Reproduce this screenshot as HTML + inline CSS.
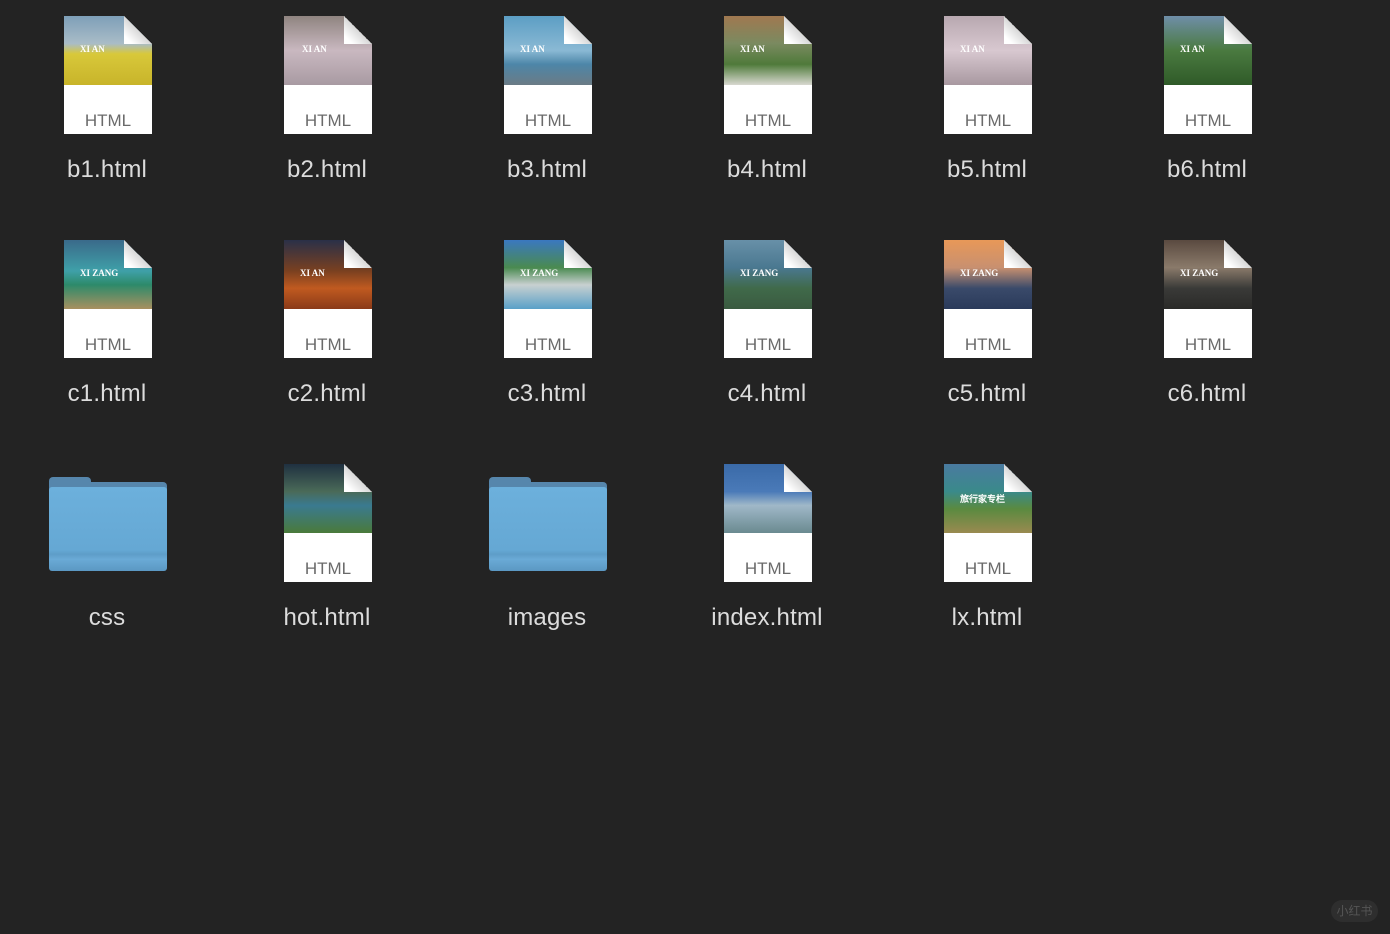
<!DOCTYPE html>
<html><head><meta charset="utf-8"><style>
body{margin:0;width:1390px;height:934px;background:#232323;font-family:"Liberation Sans",sans-serif;position:relative;overflow:hidden}
.f{position:absolute;width:88px;height:118px;background:#fff;clip-path:polygon(0 0,60px 0,88px 28px,88px 118px,0 118px)}
.f .img{position:absolute;left:0;top:0;width:88px;height:69px}
.f .fold{position:absolute;right:0;top:0;width:28px;height:28px;background:linear-gradient(225deg,#232323 50%,#d8d8d8 50%,#fff 85%)}
.f .t{position:absolute;left:0;right:0;top:95px;text-align:center;font-size:17px;color:#6a6a6a}
.f .x{position:absolute;left:16px;top:28px;font:bold 9px "Liberation Serif",serif;color:#fff}
.l{position:absolute;width:200px;text-align:center;font-size:24px;color:#dcdcdc;letter-spacing:0.2px}
.d{position:absolute;width:118px;height:95px}
.d .tab{position:absolute;left:0;top:0;width:42px;height:14px;background:#5686ac;border-radius:4px 4px 0 0}
.d .tab2{position:absolute;left:0;top:5px;width:118px;height:10px;background:#5686ac;border-radius:4px 4px 0 0}
.d .b{position:absolute;left:0;top:10px;width:118px;height:84px;border-radius:3px;background:linear-gradient(#6cb0dc,#65a8d4 75%,#5e9dc8 80%,#6aaad6 86%,#5b98c3)}
.wm{position:absolute;left:1331px;top:900px;width:47px;height:22px;border-radius:11px;background:#2e2e2e;color:#555;font:12px "Noto Sans CJK SC",sans-serif;text-align:center;line-height:22px}
</style></head><body>
<div class="f" style="left:64px;top:16px"><div class="img" style="background:linear-gradient(#7e9fb8 0,#a9bcc7 40%,#d8c83a 55%,#c8b42a)"></div><div class="x">XI AN</div><div class="fold"></div><div class="t">HTML</div></div>
<div class="f" style="left:284px;top:16px"><div class="img" style="background:linear-gradient(#8f8480,#c9b8c0 50%,#a89aa2)"></div><div class="x" style="left:18px">XI AN</div><div class="fold"></div><div class="t">HTML</div></div>
<div class="f" style="left:504px;top:16px"><div class="img" style="background:linear-gradient(#5c9ec4,#8ab9d4 50%,#4d86a8 70%,#6b7b85)"></div><div class="x">XI AN</div><div class="fold"></div><div class="t">HTML</div></div>
<div class="f" style="left:724px;top:16px"><div class="img" style="background:linear-gradient(#a07850,#7a8a60 40%,#4f7a3a 70%,#d8d8d0)"></div><div class="x">XI AN</div><div class="fold"></div><div class="t">HTML</div></div>
<div class="f" style="left:944px;top:16px"><div class="img" style="background:linear-gradient(#b8a8b0,#d8c8d0 50%,#a898a0)"></div><div class="x">XI AN</div><div class="fold"></div><div class="t">HTML</div></div>
<div class="f" style="left:1164px;top:16px"><div class="img" style="background:linear-gradient(#6f8ea8,#4a7a40 50%,#2f5a28)"></div><div class="x">XI AN</div><div class="fold"></div><div class="t">HTML</div></div>
<div class="l" style="left:7px;top:156px">b1.html</div><div class="l" style="left:227px;top:156px">b2.html</div><div class="l" style="left:447px;top:156px">b3.html</div><div class="l" style="left:667px;top:156px">b4.html</div><div class="l" style="left:887px;top:156px">b5.html</div><div class="l" style="left:1107px;top:156px">b6.html</div>

<div class="f" style="left:64px;top:240px"><div class="img" style="background:linear-gradient(#3a6a8a,#3fa0a8 45%,#2d8a6a 65%,#a89060)"></div><div class="x">XI ZANG</div><div class="fold"></div><div class="t">HTML</div></div>
<div class="f" style="left:284px;top:240px"><div class="img" style="background:linear-gradient(#2a3048,#7a4020 45%,#c05a20 70%,#8a3a18)"></div><div class="x">XI AN</div><div class="fold"></div><div class="t">HTML</div></div>
<div class="f" style="left:504px;top:240px"><div class="img" style="background:linear-gradient(#3a78c0,#4a8a50 40%,#c8d0d0 65%,#5aa0c8)"></div><div class="x">XI ZANG</div><div class="fold"></div><div class="t">HTML</div></div>
<div class="f" style="left:724px;top:240px"><div class="img" style="background:linear-gradient(#6890a8,#4a7890 40%,#406a4a 70%,#3a5a40)"></div><div class="x">XI ZANG</div><div class="fold"></div><div class="t">HTML</div></div>
<div class="f" style="left:944px;top:240px"><div class="img" style="background:linear-gradient(#e89858,#c89070 40%,#3a4a6a 70%,#2a3a5a)"></div><div class="x">XI ZANG</div><div class="fold"></div><div class="t">HTML</div></div>
<div class="f" style="left:1164px;top:240px"><div class="img" style="background:linear-gradient(#5a4a40,#8a7a6a 40%,#3a3a38 70%,#2a2a28)"></div><div class="x">XI ZANG</div><div class="fold"></div><div class="t">HTML</div></div>
<div class="l" style="left:7px;top:380px">c1.html</div><div class="l" style="left:227px;top:380px">c2.html</div><div class="l" style="left:447px;top:380px">c3.html</div><div class="l" style="left:667px;top:380px">c4.html</div><div class="l" style="left:887px;top:380px">c5.html</div><div class="l" style="left:1107px;top:380px">c6.html</div>

<div class="d" style="left:49px;top:477px"><div class="tab"></div><div class="tab2"></div><div class="b"></div></div>
<div class="f" style="left:284px;top:464px"><div class="img" style="background:linear-gradient(#1f3040,#4a6a58 40%,#3a7a90 60%,#4a7a3a)"></div><div class="fold"></div><div class="t">HTML</div></div>
<div class="d" style="left:489px;top:477px"><div class="tab"></div><div class="tab2"></div><div class="b"></div></div>
<div class="f" style="left:724px;top:464px"><div class="img" style="background:linear-gradient(#3a6aa8,#4a7ab8 40%,#a0b8c8 60%,#6a8a90)"></div><div class="fold"></div><div class="t">HTML</div></div>
<div class="f" style="left:944px;top:464px"><div class="img" style="background:linear-gradient(#4a7aa0,#3a8a8a 40%,#5a8a40 65%,#9a8a50)"></div><div class="x">旅行家专栏</div><div class="fold"></div><div class="t">HTML</div></div>
<div class="l" style="left:7px;top:604px">css</div><div class="l" style="left:227px;top:604px">hot.html</div><div class="l" style="left:447px;top:604px">images</div><div class="l" style="left:667px;top:604px">index.html</div><div class="l" style="left:887px;top:604px">lx.html</div>
<div class="wm">小红书</div>
</body></html>
